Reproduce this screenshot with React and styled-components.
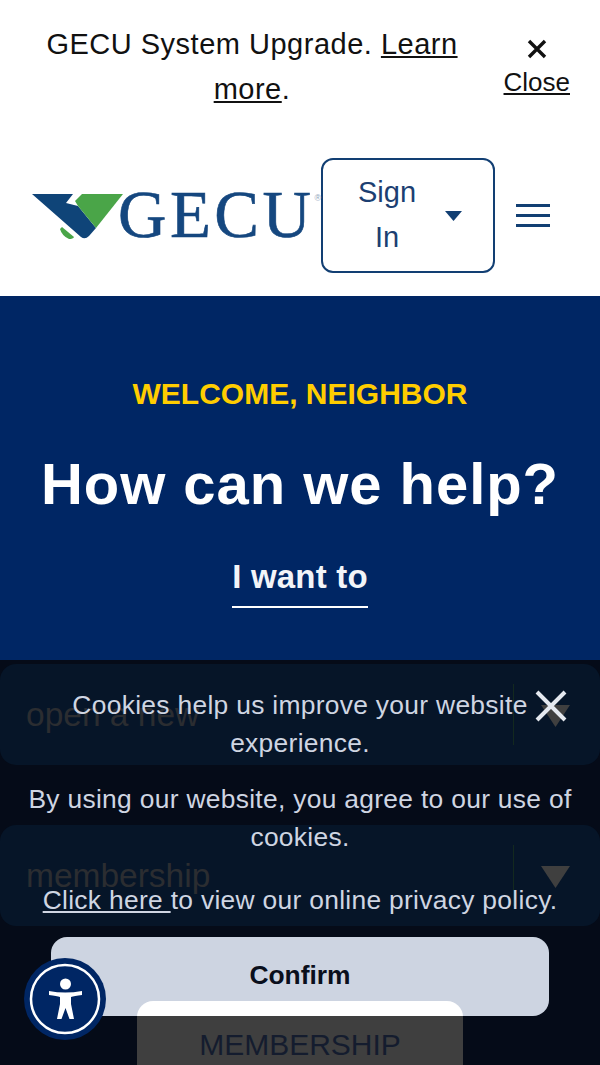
import React from "react";
import styled, { createGlobalStyle } from "styled-components";

const Global = createGlobalStyle`
  html, body {
    margin: 0;
    padding: 0;
    background: #fff;
    font-family: "Liberation Sans", Arial, sans-serif;
  }
  * { box-sizing: border-box; }
`;

const Page = styled.div`
  position: relative;
  width: 600px;
  height: 1065px;
  overflow: hidden;
  background: #fff;
`;

const Banner = styled.div`
  display: flex;
  height: 134px;
  padding: 22px 30px 0 46px;
  justify-content: space-between;
  color: #111;
`;

const BannerText = styled.p`
  width: 412px;
  margin: 0;
  font-size: 29px;
  line-height: 45px;
  letter-spacing: 0.5px;
  text-align: center;
  a { color: inherit; text-decoration: underline; }
`;

const CloseBlock = styled.a`
  display: flex;
  flex-direction: column;
  align-items: center;
  padding-top: 17px;
  font-size: 26px;
  line-height: 34px;
  color: #111;
  span { text-decoration: underline; }
  svg { display: block; margin-bottom: 6px; }
`;

const Header = styled.header`
  display: flex;
  height: 162px;
  padding: 24px 50px 0 32px;
  align-items: flex-start;
`;

const Logo = styled.div`
  display: flex;
  width: 289px;
  height: 115px;
  align-items: center;
  svg { display: block; flex: none; }
`;

const LogoText = styled.span`
  position: relative;
  top: -1px;
  margin-left: -6px;
  font-family: "Liberation Serif", serif;
  font-size: 67px;
  line-height: 1;
  letter-spacing: 3.5px;
  color: #15477f;
  -webkit-text-stroke: 0.6px #15477f;
  sup {
    font-family: "Liberation Sans", sans-serif;
    font-size: 9px;
    letter-spacing: 0;
    color: #8fa6bd;
    -webkit-text-stroke: 0;
    vertical-align: 36px;
    line-height: 0;
  }
`;

const SignIn = styled.button`
  display: flex;
  width: 174px;
  height: 115px;
  padding: 0 31px 0 28px;
  align-items: center;
  justify-content: space-between;
  background: #fff;
  border: 2px solid #123f73;
  border-radius: 12px;
  font-family: inherit;
  font-size: 29px;
  line-height: 45px;
  color: #1c3f72;
  span { width: 72px; margin-top: -2px; text-align: center; }
`;

const Burger = styled.div`
  display: flex;
  flex-direction: column;
  gap: 7px;
  width: 34px;
  margin: 46px 0 0 21px;
  i { display: block; height: 3px; background: #123f73; }
`;

const Hero = styled.section`
  height: 364px;
  padding-top: 81px;
  background: #002664;
  text-align: center;
`;

const Eyebrow = styled.div`
  font-size: 30px;
  font-weight: 700;
  line-height: 34px;
  color: #ffcd00;
`;

const Title = styled.h1`
  margin: 41px 0 0;
  font-size: 58px;
  font-weight: 700;
  line-height: 64px;
  letter-spacing: 0.95px;
  color: #fff;
`;

const Want = styled.div`
  display: inline-block;
  margin-top: 41px;
  padding-bottom: 9px;
  border-bottom: 2px solid #fff;
  font-size: 33px;
  font-weight: 700;
  line-height: 40px;
  letter-spacing: 0.2px;
  color: #f2f4f8;
`;

const Shade = styled.section`
  height: 405px;
  padding-top: 4px;
  background: #050b18;
`;

const SelectBox = styled.div`
  display: flex;
  height: 101px;
  margin-bottom: ${(p) => p.$gap}px;
  align-items: center;
  background: #061528;
  border-radius: 16px;
  font-size: 33.5px;
  color: #2b2d31;
`;

const SelectLabel = styled.span`
  flex: 1;
  padding-left: 26px;
`;

const SelectArrow = styled.span`
  display: flex;
  width: 87px;
  height: 61px;
  padding: 2px 3px 0 0;
  align-items: center;
  justify-content: center;
  border-left: 1px solid #13291f;
  svg { display: block; }
`;

const Membership = styled.div`
  position: relative;
  z-index: 2;
  width: 326px;
  height: 90px;
  margin: 0 auto;
  padding-top: 26px;
  background: linear-gradient(#fff 15px, #3f3f3f 15px);
  border-radius: 16px;
  font-size: 30px;
  line-height: 36px;
  text-align: center;
  color: #141c2e;
`;

const Cookie = styled.div`
  position: absolute;
  z-index: 1;
  left: 0;
  right: 0;
  bottom: 0;
  height: 405px;
  padding: 27px 20px 0;
  font-size: 26.4px;
  line-height: 37.5px;
  letter-spacing: 0.3px;
  text-align: center;
  color: #cfd5e2;
`;

const CookieText = styled.p`
  margin: 0 ${(p) => p.$inset}px ${(p) => p.$after}px;
  a { color: inherit; text-decoration: underline; }
`;

const CookieClose = styled.button`
  position: absolute;
  top: 30px;
  right: 32px;
  padding: 0;
  background: none;
  border: 0;
  svg { display: block; }
`;

const Confirm = styled.button`
  display: block;
  width: 498px;
  height: 79px;
  margin: 0 0 0 31px;
  padding: 0 0 2px;
  background: #cdd4e1;
  border: 0;
  border-radius: 16px;
  font-family: inherit;
  font-size: 26.4px;
  font-weight: 700;
  color: #0a0f1c;
`;

const Access = styled.button`
  position: absolute;
  z-index: 3;
  left: 24px;
  top: 958px;
  width: 82px;
  height: 82px;
  padding: 0;
  background: none;
  border: 0;
  svg { display: block; }
`;

function LogoMark() {
  return (
    <svg width="92" height="50" viewBox="0 0 92 50" aria-hidden="true">
      <path d="M0 3 H41 L34 12 L46 15 L64 37 L57 45 Q53 49 49 46 Z" fill="#0f4478" />
      <path d="M50 3 H91 L64 37 L46 15 L43 10 Z" fill="#4aa548" />
      <path d="M28 38 L30 36 L42 46 Q41 48 37 48 Q30 45 28 38 Z" fill="#4aa548" />
    </svg>
  );
}

function Arrow() {
  return (
    <svg width="29" height="22" viewBox="0 0 29 22" aria-hidden="true">
      <path d="M0 0 H29 L14.5 22 Z" fill="#3f3f3f" />
    </svg>
  );
}

function AccessIcon() {
  return (
    <svg width="82" height="82" viewBox="0 0 82 82" aria-hidden="true">
      <circle cx="41" cy="41" r="41" fill="#002664" />
      <circle cx="41" cy="41" r="34" fill="none" stroke="#fff" strokeWidth="2.5" />
      <circle cx="41.5" cy="26" r="5.5" fill="#fff" />
      <path
        d="M25 33 Q41 36 58 33 V37 Q50 38 47 39 V46 L50 61 H45.5 L41.5 50 L37.5 61 H33 L36 46 V39 Q33 38 25 37 Z"
        fill="#fff"
      />
    </svg>
  );
}

export default function App() {
  return (
    <Page>
      <Global />
      <Banner>
        <BannerText>
          GECU System Upgrade. <a href="#learn">Learn more</a>.
        </BannerText>
        <CloseBlock>
          <svg width="20" height="20" viewBox="0 0 20 20" aria-hidden="true">
            <path d="M2 2 L18 18 M18 2 L2 18" stroke="#111" strokeWidth="3.4" />
          </svg>
          <span>Close</span>
        </CloseBlock>
      </Banner>
      <Header>
        <Logo>
          <LogoMark />
          <LogoText>
            GECU<sup>®</sup>
          </LogoText>
        </Logo>
        <SignIn>
          <span>Sign In</span>
          <svg width="17" height="10" viewBox="0 0 17 10" aria-hidden="true">
            <path d="M0 0 H17 L8.5 10 Z" fill="#123f73" />
          </svg>
        </SignIn>
        <Burger>
          <i />
          <i />
          <i />
        </Burger>
      </Header>
      <Hero>
        <Eyebrow>WELCOME, NEIGHBOR</Eyebrow>
        <Title>How can we help?</Title>
        <Want>I want to</Want>
      </Hero>
      <Shade>
        <SelectBox $gap={60}>
          <SelectLabel>open a new</SelectLabel>
          <SelectArrow>
            <Arrow />
          </SelectArrow>
        </SelectBox>
        <SelectBox $gap={75}>
          <SelectLabel>membership</SelectLabel>
          <SelectArrow>
            <Arrow />
          </SelectArrow>
        </SelectBox>
        <Membership>MEMBERSHIP</Membership>
      </Shade>
      <Cookie>
        <CookieClose aria-label="Close cookie notice">
          <svg width="34" height="32" viewBox="0 0 34 32" aria-hidden="true">
            <path d="M3 2 L31 30 M31 2 L3 30" stroke="#e4e8ef" strokeWidth="4" />
          </svg>
        </CookieClose>
        <CookieText $inset={32} $after={19}>
          Cookies help us improve your website experience.
        </CookieText>
        <CookieText $inset={0} $after={26}>
          By using our website, you agree to our use of cookies.
        </CookieText>
        <CookieText $inset={0} $after={17}>
          <a href="#privacy">Click here </a>to view our online privacy policy.
        </CookieText>
        <Confirm>Confirm</Confirm>
      </Cookie>
      <Access aria-label="Accessibility">
        <AccessIcon />
      </Access>
    </Page>
  );
}
